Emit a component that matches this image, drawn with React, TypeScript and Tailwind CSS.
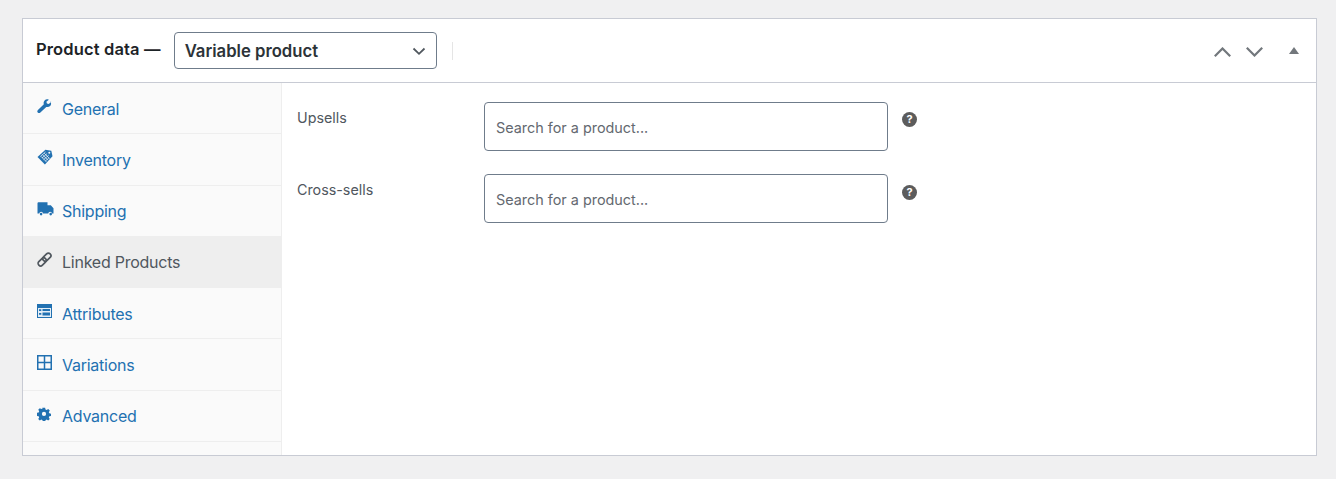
import React from "react";

const navItems = [
  { label: "General", icon: "wrench" },
  { label: "Inventory", icon: "tag" },
  { label: "Shipping", icon: "truck" },
  { label: "Linked Products", icon: "link", active: true },
  { label: "Attributes", icon: "attrs" },
  { label: "Variations", icon: "grid" },
  { label: "Advanced", icon: "gear" },
];

function NavIcon({ name }: { name: string }) {
  if (name === "wrench") {
    return (
      <svg width="15" height="15" viewBox="0 0 16 16" fill="currentColor">
        <path d="M15.2 2.9l-2.6 2.4-2-.4-.6-1.900L12.600.700C11-.100 9.200.300 8.100 1.500 7 2.600 6.800 4.200 7.300 5.600L1 11.600c-.900.800-.900 2-.200 2.800.800.800 2 .800 2.800 0l6.300-6c1.400.500 3 .200 4.100-.900 1.200-1.200 1.500-3.100.200-4.600z" />
      </svg>
    );
  }
  if (name === "tag") {
    return (
      <svg width="16" height="16" viewBox="0 0 16 16">
        <path fill="currentColor" d="M8.400.700l5.900 1 1.200 5.600-7.600 8.100L.500 8.100 8.400.700z" />
        <circle cx="12.300" cy="3.800" r="1" fill="#fafafa" />
        <path
          fill="none"
          stroke="#fafafa"
          strokeWidth="0.700"
          d="M3.400 7.400L8.500 3M5 9l5.100-4.400M6.600 10.600l5.100-4.400M8.200 12.200l4-3.600M5.500 5.700l5.500 5.500M7.200 4.200l5.400 5.400M3.900 7.300l5.500 5.500"
        />
      </svg>
    );
  }
  if (name === "truck") {
    return (
      <svg width="17" height="14" viewBox="0 0 17 14" fill="currentColor">
        <path d="M.500 1.300C.500.700.900.300 1.400.300h9.100v2.900h3.300l2.700 3v5.200h-1.400a2 2 0 00-3.900 0H6.100a2 2 0 00-3.900 0H.500V1.300z" />
        <circle cx="4.100" cy="12.100" r="1.300" />
        <circle cx="13.700" cy="12.100" r="1.300" />
      </svg>
    );
  }
  if (name === "link") {
    return (
      <svg width="15" height="15" viewBox="0 0 16 16" fill="none" stroke="currentColor" strokeWidth="1.800">
        <rect x="7.800" y="0.500" width="5.400" height="10" rx="2.700" transform="rotate(45 10.500 5.500)" />
        <rect x="2.800" y="5.500" width="5.400" height="10" rx="2.700" transform="rotate(45 5.500 10.500)" />
      </svg>
    );
  }
  if (name === "attrs") {
    return (
      <svg width="15" height="14" viewBox="0 0 15 14">
        <path fill="currentColor" d="M0 0h15v14H0z" />
        <path fill="#e4eef6" d="M1 4h13v9H1z" />
        <path fill="currentColor" d="M5.500 5h7.500v1.900H5.500zM5.500 8.400h7.500v3H5.500z" />
        <path fill="currentColor" d="M2 5.300h2.300v1.700H2zM2 9h2.300v1.700H2z" />
      </svg>
    );
  }
  if (name === "grid") {
    return (
      <svg width="15" height="15" viewBox="0 0 15 15" fill="none" stroke="currentColor" strokeWidth="1.500">
        <path d="M.750.750h13.500v13.500H.750zM7.500.750v13.500M.750 7.500h13.500" />
      </svg>
    );
  }
  return (
    <svg width="14" height="14" viewBox="0 0 16 16" fill="currentColor">
      <path
        fillRule="evenodd"
        d="M6.700.800h2.600l.400 2 1.300.600 1.800-1.100 1.800 1.800-1.100 1.800.600 1.300 2 .400v2.600l-2 .400-.600 1.300 1.100 1.800-1.800 1.800-1.800-1.100-1.300.600-.400 2H6.700l-.400-2-1.300-.600-1.800 1.100-1.800-1.800 1.100-1.800-.600-1.300-2-.400V6.600l2-.400.600-1.300-1.100-1.800 1.800-1.800 1.800 1.100 1.300-.600.400-2zM8 5.500a2.400 2.400 0 100 4.800 2.400 2.400 0 000-4.800z"
      />
    </svg>
  );
}

function FieldRow({ label, helpTop }: { label: string; helpTop: string }) {
  return (
    <div className="flex items-start h-[49px]">
      <label className="w-[187px] mt-[6px] text-[14.300px] leading-[20px] text-[#50575e]">{label}</label>
      <input
        type="text"
        placeholder="Search for a product..."
        className="w-[404px] h-[49px] px-[11px] pt-[2px] border border-[#6f7c8b] rounded-[4px] bg-white text-[14.400px] outline-none placeholder:text-[#646970]"
      />
      <span
        className={`ml-[14px] ${helpTop} w-[15px] h-[15px] rounded-full bg-[#5c5c5c] flex items-center justify-center text-white text-[11px] leading-none font-bold`}
      >
        ?
      </span>
    </div>
  );
}

export default function App() {
  return (
    <div className="w-[1336px] h-[479px] bg-[#f0f0f1] pt-[18px] pl-[22px] overflow-hidden font-['Inter','Liberation_Sans',sans-serif]">
      <div className="w-[1295px] h-[438px] bg-white border border-[#c8cbd4] flex flex-col">
        {/* header */}
        <div className="h-[64px] shrink-0 border-b border-[#c8cbd4] flex items-center pl-[13px]">
          <span className="text-[16.500px] font-semibold text-[#1d2327] tracking-[0.140px] mr-[13px] -mt-[3px]">
            Product data —
          </span>
          <div className="w-[263px] h-[37px] border border-[#6f7c8b] rounded-[4px] flex items-center justify-between pl-[10px] pr-[9px]">
            <span className="text-[16.700px] font-semibold text-[#2c3338] mt-[2px]">Variable product</span>
            <svg width="16" height="16" viewBox="0 0 16 16" fill="none" stroke="#50575e" strokeWidth="1.800">
              <path d="M2.500 5.500L8 10.800l5.500-5.300" />
            </svg>
          </div>
          <div className="ml-[15px] w-px h-[18px] bg-[#e5e5e5]" />
          <div className="ml-auto flex items-center mr-[17px] mt-[3px]">
            <svg width="17" height="10" viewBox="0 0 17 10" fill="none" stroke="#72777c" strokeWidth="2.200">
              <path d="M.800 9.200L8.500 1.500l7.700 7.700" />
            </svg>
            <svg className="ml-[15px]" width="17" height="10" viewBox="0 0 17 10" fill="none" stroke="#72777c" strokeWidth="2.200">
              <path d="M.800.800l7.700 7.700 7.700-7.700" />
            </svg>
            <svg className="ml-[26px] -mt-[3px]" width="10" height="7" viewBox="0 0 10 7" fill="#72777c">
              <path d="M5 0l5 7H0z" />
            </svg>
          </div>
        </div>
        {/* body */}
        <div className="flex flex-1 min-h-0">
          <ul className="w-[259px] shrink-0 bg-[#fafafa] border-r border-[#eeeeee]">
            {navItems.map((item) => (
              <li
                key={item.label}
                className={`h-[51.250px] flex items-center pl-[14px] border-b border-[#eeeeee] ${
                  item.active ? "bg-[#eeeeee] text-[#50575e]" : "text-[#2271b1]"
                }`}
              >
                <span className="w-[25px] -mt-[4px] flex items-center">
                  <NavIcon name={item.icon} />
                </span>
                <span className="text-[16px] leading-[20px] tracking-[-0.250px] mt-[1px]">{item.label}</span>
              </li>
            ))}
          </ul>
          <div className="flex-1 pl-[15px] pt-[19px] flex flex-col gap-[23px]">
            <FieldRow label="Upsells" helpTop="mt-[10px]" />
            <FieldRow label="Cross-sells" helpTop="mt-[11px]" />
          </div>
        </div>
      </div>
    </div>
  );
}
